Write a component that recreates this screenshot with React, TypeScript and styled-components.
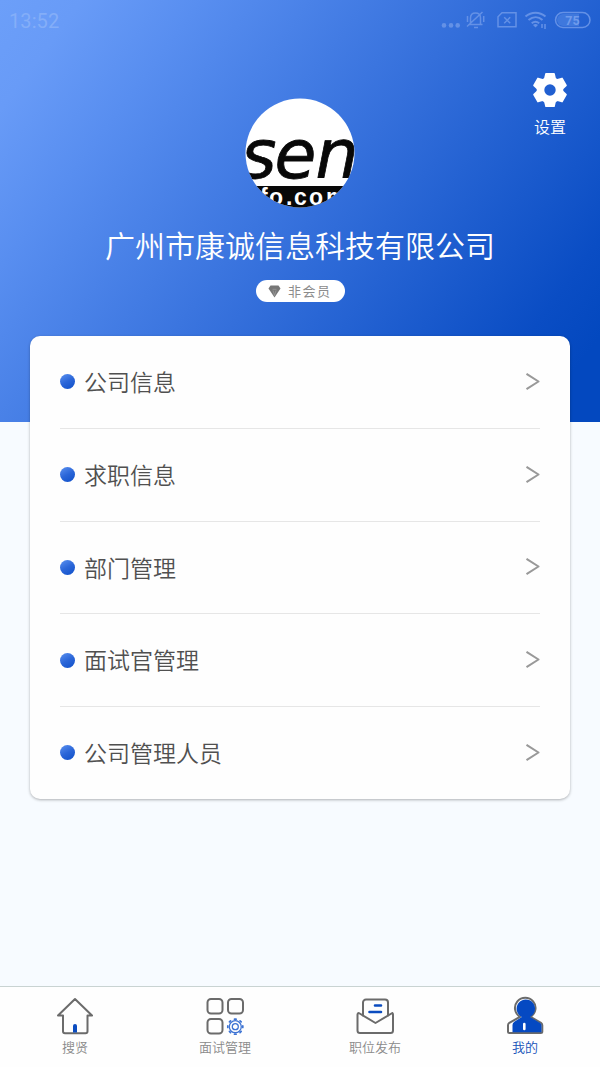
import React from "react";
import styled, { createGlobalStyle } from "styled-components";

const Global = createGlobalStyle`
  * { box-sizing: border-box; }
  body {
    margin: 0;
    font-family: "Noto Sans CJK SC", sans-serif;
    background: #f7fbff;
  }
`;

const Screen = styled.div`
  width: 600px;
  height: 1067px;
  display: flex;
  flex-direction: column;
  background: #f7fbff;
  overflow: hidden;
`;

const Hero = styled.header`
  height: 421.5px;
  flex: none;
  background: linear-gradient(127deg, #6c9ff9 0%, #689bf7 9%, #588ef0 22%, #346fdb 52%, #0a4dc4 85%, #0348bf 93%);
`;

const StatusBar = styled.div`
  height: 40px;
  padding: 0 8px 0 9px;
  display: flex;
  justify-content: space-between;
  align-items: center;
  color: #84aef8;
`;

const Clock = styled.span`
  font: 400 20px/40px Roboto, sans-serif;
  letter-spacing: 0.1px;
  padding-top: 2px;
`;

const Profile = styled.div`
  display: grid;
  grid-template-columns: 100px 400px 100px;
`;

const Identity = styled.div`
  grid-column: 2;
  display: flex;
  flex-direction: column;
  align-items: center;
  padding-top: 58px;
`;

const AvatarArt = styled.svg`
  display: block;
  width: 110px;
  height: 110px;
`;

const Company = styled.h1`
  margin: 14px 0 0;
  font-size: 30px;
  line-height: 44px;
  font-weight: 350;
  color: #fff;
  white-space: nowrap;
`;

const Badge = styled.div`
  margin-top: 14px;
  width: 89px;
  height: 22px;
  border-radius: 11px;
  background: #fff;
  display: flex;
  align-items: center;
  padding-left: 12.5px;
  gap: 7px;
  font-size: 13px;
  letter-spacing: 1.5px;
  line-height: 22px;
  color: #8c8c8c;
  white-space: nowrap;
`;

const Settings = styled.div`
  display: flex;
  flex-direction: column;
  align-items: center;
  padding-top: 32px;
  font-size: 16px;
  line-height: 24px;
  font-weight: 350;
  color: #fff;
  gap: 6px;
`;

const Menu = styled.nav`
  flex: none;
  margin: -85.5px 30px 0;
  height: 462.5px;
  padding: 0 30px;
  background: #fefefe;
  border-radius: 10px;
  box-shadow: 0 1px 3px rgba(0, 0, 0, 0.3);
  display: flex;
  flex-direction: column;
`;

const MenuRow = styled.div`
  flex: 0 0 92.75px;
  display: flex;
  align-items: center;
  border-bottom: 1px solid #e6e6e6;
  &:last-child { border-bottom-color: transparent; }
`;

const Dot = styled.i`
  width: 15px;
  height: 15px;
  border-radius: 50%;
  background: linear-gradient(150deg, #5289ec 10%, #2b66d8 50%, #1454cc 90%);
  margin-right: 9px;
`;

const MenuLabel = styled.span`
  flex: 1;
  padding-bottom: 1.5px;
  font-size: 23px;
  line-height: 34px;
  font-weight: 350;
  color: #505050;
`;

const TabBar = styled.footer`
  margin-top: auto;
  flex: none;
  height: 81px;
  background: #fefefe;
  border-top: 1px solid #c9d3d2;
  display: grid;
  grid-template-columns: repeat(4, 1fr);
`;

const Tab = styled.div<{ $active?: boolean }>`
  display: flex;
  flex-direction: column;
  align-items: center;
  padding-top: 9px;
  font-size: 13px;
  line-height: 20px;
  font-weight: 350;
  color: ${(p) => (p.$active ? "#1450b8" : "#8a8a8a")};
`;

const TabIcon = styled.svg`
  width: 40px;
  height: 40px;
  fill: none;
  stroke: #6b6b6b;
  stroke-width: 2;
  stroke-linejoin: round;
  stroke-linecap: round;
  margin-bottom: 1px;
`;

const StatusIcons = () => (
  <svg width="152" height="40" viewBox="440 0 152 40" fill="none" stroke="#6491e6" strokeWidth="1.5">
    <g fill="#6491e6" stroke="none">
      <circle cx="444" cy="25.4" r="2.3" />
      <circle cx="451" cy="25.4" r="2.3" />
      <circle cx="457.7" cy="25.4" r="2.3" />
    </g>
    <path d="M469 24.5h13.5M470.5 24v-6c0-3 2-5 5-5s5 2 5 5v6M474 27.5h4M467 26.5l15.5-14.5M467.5 16v6M483.7 16v6" />
    <path d="M502 12.8H516V26.8H498V16.8zM504.2 17.2l6 6M510.2 17.2l-6 6" />
    <path d="M525.5 16.5c6-5 14-5 20 0M528.5 20c4.5-3.7 10-3.7 14 0M531.7 23.2c2.5-2 5-2 7.5 0" strokeWidth="2" />
    <path d="M533 25q2.5-2 5 0l-2.5 2.5z" fill="#6491e6" stroke="none" />
    <path d="M542 24v4M545 24v5" />
    <rect x="555.5" y="12.5" width="34.5" height="15" rx="7.5" />
    <path d="M563 14h16v12h-16a6 6 0 0 1 0-12z" fill="#3f78dd" stroke="none" />
    <text x="572.5" y="24.5" fill="#6f9bec" stroke="none" fontFamily="Roboto, sans-serif" fontSize="12.5" fontWeight="700" textAnchor="middle">75</text>
  </svg>
);

const Avatar = () => (
  <AvatarArt viewBox="0 0 110 110">
    <defs>
      <clipPath id="avatar-clip"><circle cx="55" cy="55" r="54.5" /></clipPath>
    </defs>
    <g clipPath="url(#avatar-clip)">
      <rect width="110" height="110" fill="#fff" />
      <text x="-4 29.5 70.5" y="80" fontFamily="DejaVu Sans, sans-serif" fontStyle="italic" fontSize="68" fill="#080808" stroke="#080808" strokeWidth=".8">sen</text>
      <rect y="88" width="110" height="22" fill="#080808" />
      <text x="15 24 41 49 64 81" y="107" fontFamily="Liberation Sans, sans-serif" fontWeight="700" fontSize="23" fill="#fff">fo.com</text>
    </g>
  </AvatarArt>
);

const cogTeeth = [0, 60, 120, 180, 240, 300];

const Gear = () => (
  <svg width="36" height="36" viewBox="-18 -18 36 36" fill="#fff">
    <circle r="9.5" fill="none" stroke="#fff" strokeWidth="7.6" />
    {cogTeeth.map((a) => (
      <path key={a} d="M-6.5-9L-4.8-16.4Q-4.6-17-4-17H4Q4.6-17 4.8-16.4L6.5-9z" transform={`rotate(${a})`} />
    ))}
  </svg>
);

const Diamond = () => (
  <svg width="13" height="13" viewBox="0 0 13 13">
    <path d="M2.5.5h8L12.5 3.5 6.5 12.5.5 3.5z" fill="#777" />
    <path d="M4.5 4.3h4M5 5.5l1.5 5 1.5-5" fill="none" stroke="#a5a5a5" strokeWidth=".6" />
  </svg>
);

const Chevron = () => (
  <svg width="15" height="18" viewBox="0 0 15 18" fill="none" stroke="#999" strokeWidth="2" strokeLinejoin="round">
    <path d="M1.5 .8L13.5 8.5 1.5 16.2" />
  </svg>
);

const HomeIcon = () => (
  <TabIcon viewBox="0 0 40 40">
    <path d="M20 3L37 19.5H32.5V35.2a2 2 0 0 1-2 2H10a2 2 0 0 1-2-2V19.5H3z" />
    <path d="M18 36.5v-6.5a2 2 0 0 1 4 0v6.5z" fill="#0b4cc0" stroke="none" />
  </TabIcon>
);

const teeth = Array.from({ length: 8 }, (_, i) => i * 45);

const ManageIcon = () => (
  <TabIcon viewBox="0 0 40 40">
    <rect x="2.5" y="3" width="15" height="14.5" rx="3.5" />
    <rect x="23" y="3" width="15" height="14.5" rx="3.5" />
    <rect x="2.5" y="23" width="15" height="14.5" rx="3.5" />
    <g stroke="#3d73d3" strokeWidth="1.3" transform="translate(30.3 30.7)">
      <circle r="6" />
      <circle r="3" />
      {teeth.map((a) => (
        <path key={a} d="M-.8-7.5h1.6" strokeWidth="1.7" transform={`rotate(${a})`} />
      ))}
    </g>
  </TabIcon>
);

const MailIcon = () => (
  <TabIcon viewBox="0 0 40 40">
    <path d="M8 19.5V6.5a3 3 0 0 1 3-3H30a3 3 0 0 1 3 3V19.5" />
    <path d="M3.8 17L20.5 27 37.3 17q.7.3.7 1.5V34.5a2.5 2.5 0 0 1-2.5 2.5H5a2.5 2.5 0 0 1-2.5-2.5V18.5q0-1.2 1.3-1.5z" />
    <path d="M20 9.5h6M14.5 16h11.5" stroke="#0b4cc0" strokeWidth="2.6" />
  </TabIcon>
);

const UserIcon = () => (
  <TabIcon viewBox="0 0 40 40">
    <path d="M15 20.8A10.3 10.3 0 1 1 25.5 20.8L36 26.8Q37.3 27.7 37.3 29.2V35.5Q37.3 37 35.8 37H4.5Q3 37 3 35.5V29.2Q3 27.7 4.3 26.8z" fill="#fff" />
    <path d="M16.8 21A9.2 9.2 0 1 1 25 20.9L35.5 27.2Q36.5 28 36.5 29.5V36.2H7.5V29Q7.5 27 9.3 25.8z" fill="#0549c2" stroke="none" />
    <path d="M19.3 28v5" stroke="#fff" strokeWidth="2.6" />
  </TabIcon>
);

const items = ["公司信息", "求职信息", "部门管理", "面试官管理", "公司管理人员"];

export default function App() {
  return (
    <Screen>
      <Global />
      <Hero>
        <StatusBar>
          <Clock>13:52</Clock>
          <StatusIcons />
        </StatusBar>
        <Profile>
          <Identity>
            <Avatar />
            <Company>广州市康诚信息科技有限公司</Company>
            <Badge>
              <Diamond />
              非会员
            </Badge>
          </Identity>
          <Settings>
            <Gear />
            设置
          </Settings>
        </Profile>
      </Hero>
      <Menu>
        {items.map((label) => (
          <MenuRow key={label}>
            <Dot />
            <MenuLabel>{label}</MenuLabel>
            <Chevron />
          </MenuRow>
        ))}
      </Menu>
      <TabBar>
        <Tab><HomeIcon />搜贤</Tab>
        <Tab><ManageIcon />面试管理</Tab>
        <Tab><MailIcon />职位发布</Tab>
        <Tab $active><UserIcon />我的</Tab>
      </TabBar>
    </Screen>
  );
}
